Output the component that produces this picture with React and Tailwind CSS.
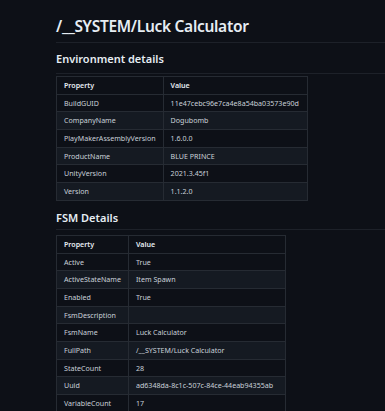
import React from 'react';

const envRows = [
  ['BuildGUID', '11e47cebc96e7ca4e8a54ba03573e90d'],
  ['CompanyName', 'Dogubomb'],
  ['PlayMakerAssemblyVersion', '1.6.0.0'],
  ['ProductName', 'BLUE PRINCE'],
  ['UnityVersion', '2021.3.45f1'],
  ['Version', '1.1.2.0'],
];

const fsmRows = [
  ['Active', 'True'],
  ['ActiveStateName', 'Item Spawn'],
  ['Enabled', 'True'],
  ['FsmDescription', ''],
  ['FsmName', 'Luck Calculator'],
  ['FullPath', '/__SYSTEM/Luck Calculator'],
  ['StateCount', '28'],
  ['Uuid', 'ad6348da-8c1c-507c-84ce-44eab94355ab'],
  ['VariableCount', '17'],
];

const PropTable = ({ rows, keyWidth, valWidth }) => (
  <table className="table-fixed border-collapse text-[7.1px] text-[#c9d1d9]">
    <colgroup>
      <col style={{ width: keyWidth }} />
      <col style={{ width: valWidth }} />
    </colgroup>
    <thead>
      <tr className="h-[17.7px]">
        <th className="border border-[#262b33] px-[7px] py-0 text-left font-semibold text-[#e6edf3]">
          Property
        </th>
        <th className="border border-[#262b33] px-[7px] py-0 text-left font-semibold text-[#e6edf3]">
          Value
        </th>
      </tr>
    </thead>
    <tbody>
      {rows.map(([k, v], idx) => (
        <tr key={k} className={`h-[17.7px] ${idx % 2 === 1 ? 'bg-[#151a22]' : ''}`}>
          <td className="border border-[#262b33] px-[7px] py-0 whitespace-nowrap">{k}</td>
          <td className="border border-[#262b33] px-[7px] py-0 whitespace-nowrap">{v}</td>
        </tr>
      ))}
    </tbody>
  </table>
);

export default function App() {
  return (
    <div
      className="min-h-[411px] w-[385px] overflow-hidden bg-[#0d1017] pl-[56px] text-[#e6edf3]"
      style={{ fontFamily: '"Noto Sans", "Open Sans", sans-serif' }}
    >
      {/* Title */}
      <h1 className="border-b border-[#1d2129] pt-[14px] pb-[4px] text-[15.5px] font-semibold leading-[24px] tracking-[-0.3px]">
        /__SYSTEM/Luck Calculator
      </h1>

      {/* Environment */}
      <h2 className="mt-[8px] border-b border-[#1d2129] pb-[6px] text-[11px] font-semibold leading-[16px]">
        Environment details
      </h2>
      <div className="mt-[2px]">
        <PropTable rows={envRows} keyWidth={106} valWidth={144} />
      </div>

      {/* FSM */}
      <h2 className="mt-[9px] border-b border-[#1d2129] pb-[3px] text-[11px] font-semibold leading-[16px]">
        FSM Details
      </h2>
      <div className="mt-[5px]">
        <PropTable rows={fsmRows} keyWidth={71} valWidth={157} />
      </div>
    </div>
  );
}
